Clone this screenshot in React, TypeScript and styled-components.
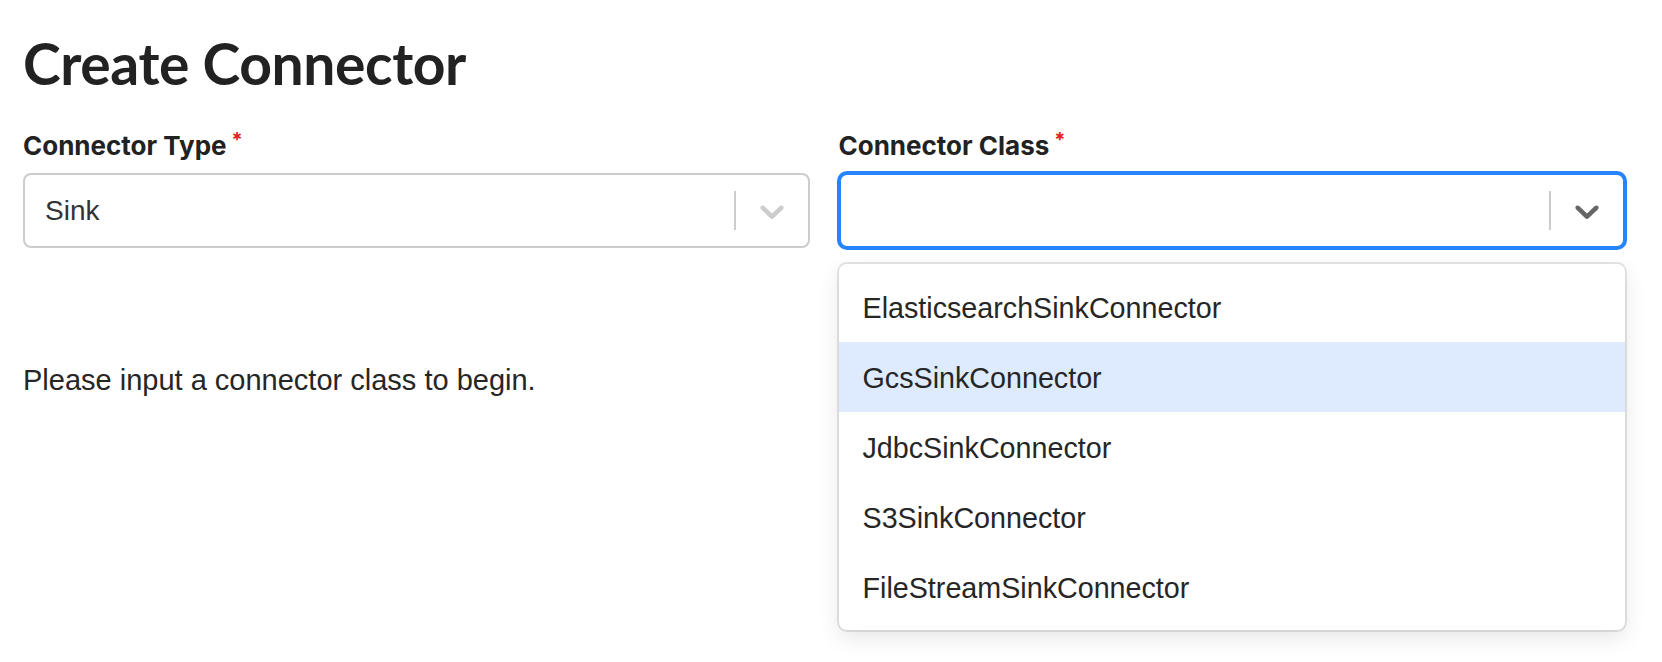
import styled, { createGlobalStyle } from 'styled-components'

const GlobalStyle = createGlobalStyle`
  body {
    margin: 0;
    background: #fff;
    color: #222;
    font-family: "Liberation Sans", Arial, sans-serif;
  }
`

const connectorClasses = [
  'ElasticsearchSinkConnector',
  'GcsSinkConnector',
  'JdbcSinkConnector',
  'S3SinkConnector',
  'FileStreamSinkConnector',
]

const Chevron = () => (
  <svg viewBox="0 0 20 20" width="40" height="40" aria-hidden="true" focusable="false">
    <path
      fill="currentColor"
      d="M4.516 7.548c0.436-0.446 1.043-0.481 1.576 0l3.908 3.747 3.908-3.747c0.533-0.481 1.141-0.446 1.574 0 0.436 0.445 0.408 1.197 0 1.615-0.406 0.418-4.695 4.502-4.695 4.502-0.217 0.223-0.502 0.335-0.787 0.335s-0.57-0.112-0.789-0.335c0 0-4.287-4.084-4.695-4.502s-0.436-1.17 0-1.615z"
    />
  </svg>
)

interface ISelectProps {
  value?: string
  focused?: boolean
  options?: string[]
  active?: number
}

const Select = ({ value, focused = false, options, active }: ISelectProps) => {
  return <SelectWrap>
    <Control $focused={focused}>
      <ValueArea>{value}</ValueArea>
      <Separator />
      <Indicator $focused={focused}>
        <Chevron />
      </Indicator>
    </Control>
    {options && <Menu>
      {options.map((o, i) =>
        <Option key={o} $active={i === active}>{o}</Option>
      )}
    </Menu>}
  </SelectWrap>
}

const App = () => {
  return <Page>
    <GlobalStyle />
    <Title>Create Connector</Title>
    <FieldGrid>
      <Field>
        <Label>Connector Type<Required>*</Required></Label>
        <Select value="Sink" />
      </Field>
      <Field>
        <Label>Connector Class<Required>*</Required></Label>
        <Select focused options={connectorClasses} active={1} />
      </Field>
    </FieldGrid>
    <Hint>Please input a connector class to begin.</Hint>
  </Page>
}

const Page = styled.div`
  box-sizing: border-box;
  min-height: 100vh;
  padding: 28px 37px 0 23px;
`

const Title = styled.h1`
  margin: 0;
  font-family: Lato, "Liberation Sans", sans-serif;
  font-weight: 700;
  font-size: 57px;
  letter-spacing: -0.4px;
  line-height: 70px;
  color: #222;
`

const FieldGrid = styled.div`
  display: grid;
  grid-template-columns: 1fr 1fr;
  column-gap: 29px;
  margin-top: 33px;
`

const Field = styled.div`
  display: flex;
  flex-direction: column;
  gap: 12px;
`

const Label = styled.label`
  font-family: Inter, "Liberation Sans", sans-serif;
  font-weight: 700;
  font-size: 26px;
  line-height: 30px;
  color: #222;
`

const Required = styled.sup`
  color: #e02424;
  font-size: 20px;
  margin-left: 5px;
  vertical-align: top;
  position: relative;
  top: -6px;
`

const SelectWrap = styled.div`
  position: relative;
`

const Control = styled.div<{ $focused: boolean }>`
  box-sizing: border-box;
  height: 75px;
  display: flex;
  align-items: center;
  background: #fff;
  border: 2px solid ${({ $focused }) => ($focused ? '#2684ff' : '#cccccc')};
  border-radius: 8px;
  box-shadow: ${({ $focused }) => ($focused ? '0 0 0 2px #2684ff' : 'none')};
`

const ValueArea = styled.div`
  flex: 1;
  padding: 0 20px;
  font-size: 28px;
  color: #333;
`

const Separator = styled.span`
  align-self: stretch;
  width: 2px;
  margin: 16px 0;
  background: #cccccc;
`

const Indicator = styled.div<{ $focused: boolean }>`
  display: flex;
  padding: 0 16px;
  color: ${({ $focused }) => ($focused ? '#666666' : '#cccccc')};
`

const Menu = styled.div`
  position: absolute;
  top: calc(100% + 16px);
  left: 0;
  right: 0;
  z-index: 2;
  padding: 8px 0;
  background: #fff;
  border-radius: 8px;
  box-shadow: 0 0 0 2px rgba(0, 0, 0, 0.1), 0 8px 22px rgba(0, 0, 0, 0.1);
`

const Option = styled.div<{ $active: boolean }>`
  padding: 17px 24px 15px;
  font-size: 28.7px;
  line-height: 38px;
  color: #262626;
  background: ${({ $active }) => ($active ? '#deebff' : 'transparent')};
`

const Hint = styled.p`
  margin: 111px 0 0;
  font-size: 29px;
  line-height: 1.5;
  color: #262626;
`

export default App
